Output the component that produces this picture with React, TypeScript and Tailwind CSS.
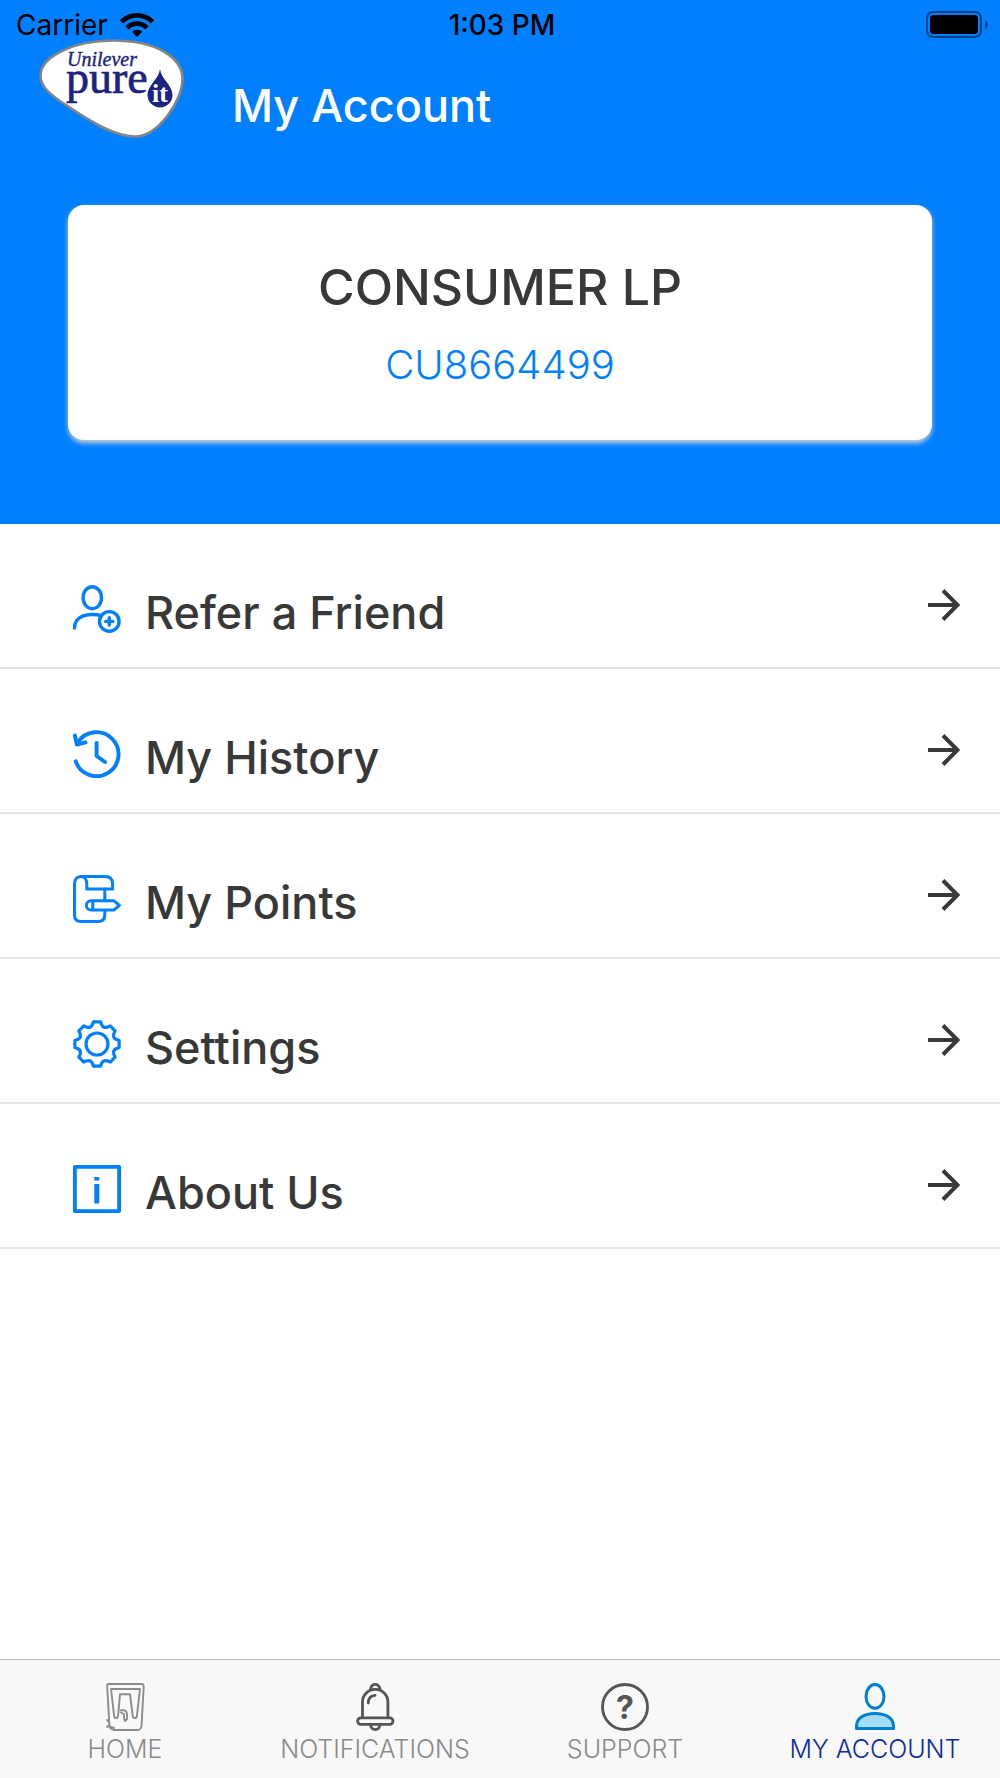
import type { ReactNode } from "react";

type iconProps = {
  children: ReactNode;
  className?: string;
};

const Icon = ({ children, className = "" }: iconProps) => (
  <svg viewBox="0 0 48 48" fill="none" stroke="currentColor" strokeLinecap="round" strokeLinejoin="round" aria-hidden="true" className={`size-12 shrink-0 ${className}`}>
    {children}
  </svg>
);

const point = (radius: number, degrees: number) => {
  const angle = (degrees * Math.PI) / 180;
  return `${(24 + radius * Math.sin(angle)).toFixed(2)} ${(24 - radius * Math.cos(angle)).toFixed(2)}`;
};

// eight teeth, with a rounded valley between each pair
const gearPath =
  [0, 45, 90, 135, 180, 225, 270, 315]
    .map((a, i) => `${i === 0 ? "M" : "L"}${point(22.4, a - 9)} L${point(22.4, a + 9)} L${point(19.6, a + 14)} Q${point(17, a + 22.5)} ${point(19.6, a + 31)}`)
    .join(" ") + " Z";

const ReferIcon = () => (
  <Icon>
    <g strokeWidth="3.4">
      <ellipse cx="19.3" cy="12.7" rx="9.2" ry="11" />
      <path d="M1.5 43C1.5 34 9 29.5 19.3 29.5C23 29.5 26 30 28.5 30.8" />
      <circle cx="36.3" cy="36.4" r="9.8" />
      <path d="M36.3 32.8V40M32.7 36.4H39.9" />
    </g>
  </Icon>
);

const HistoryIcon = () => (
  <Icon>
    <g strokeWidth="3.9">
      <path d="M2.7 31.3A22 22 0 1 0 5 12.3" />
      <path d="M1.9 5.5L3.8 14.5L12.5 12.4" />
      <path d="M23.6 13V26L32 32" />
    </g>
  </Icon>
);

const PointsIcon = () => (
  <Icon>
    <g strokeWidth="3">
      <path d="M13.8 14V9C13.8 4.5 11.5 1.5 8 1.5H32C37 1.5 39.6 4.5 39.6 9V14Z" />
      <path d="M8 1.5C4 1.5 1.5 4.5 1.5 9V40C1.5 44.5 4 46.5 8 46.5H25C29.5 46.5 31.8 44.5 31.8 40V35.3" />
      <path d="M31.8 14V25.6" />
      <path d="M18 25.8H41L46.4 30.4L41 35H18A4.6 4.6 0 0 1 18 25.8ZM19.8 25.8V35" />
    </g>
  </Icon>
);

const SettingsIcon = () => (
  <Icon>
    <path d={gearPath} strokeWidth="3.2" />
    <circle cx="24" cy="24" r="11" strokeWidth="3.2" />
  </Icon>
);

const AboutIcon = () => (
  <Icon>
    <rect x="1.8" y="1.8" width="44.4" height="44.4" rx="1" strokeWidth="4" />
    <path d="M21.3 12H26.3V15.6H21.3ZM21.3 19H26.3V38.6H21.3Z" fill="currentColor" stroke="none" />
  </Icon>
);

const HomeIcon = () => (
  <Icon className="text-[#8c8c8c]">
    <g strokeWidth="1.9">
      <path d="M7.5 1H40.5Q43 1 42.7 4L40.5 43Q40 47 36.5 47H14Q10.5 47 8.5 44L6.2 4Q5.8 1 7.5 1Z" />
      <path d="M10 6H39L35.8 33.5Q35.5 35 34 35Q32 35 31.8 33.5L29 11.3H19L17 33.5Q16.8 35 15 35Q13.5 35 13.2 33.5Z" />
      <path d="M19.5 27.3H23Q26 28 26 32V36L24 38L23 35V31L20 29.5M6 37L8 39M6 44L8.5 42M10 44L13 45" />
    </g>
  </Icon>
);

const BellIcon = () => (
  <Icon className="text-[#555555]">
    <g strokeWidth="2.8">
      <path d="M11.5 34.5V19A12.7 12.7 0 0 1 36.9 19V34.5" />
      <path d="M19.5 6Q20.5 1.4 24.2 1.4Q28 1.4 29 6" />
      <rect x="6.6" y="34.8" width="35.4" height="6.6" rx="3.3" />
      <path d="M19.5 42Q20.5 46.6 24.2 46.6Q28 46.6 29 42" />
      <path d="M17.3 20V19Q17.8 13 24 12.4" />
    </g>
  </Icon>
);

const SupportIcon = () => (
  <Icon className="text-[#555555]">
    <circle cx="24" cy="24" r="22.5" strokeWidth="2.8" />
    <text x="24" y="36" textAnchor="middle" fill="currentColor" stroke="none" className="font-['Inter',sans-serif] text-[32px] font-bold">
      ?
    </text>
  </Icon>
);

const AccountIcon = () => (
  <Icon className="text-[#0080d5]">
    <g strokeWidth="3">
      <ellipse cx="24" cy="13.4" rx="9" ry="11.9" />
      <path d="M5.5 45.5V43.5C5.5 35 13 30.6 24 30.6S42.5 35 42.5 43.5V45.5Z" fill="#a5dcf7" />
    </g>
  </Icon>
);

const WifiIcon = () => (
  <svg viewBox="0 0 34 24" fill="none" stroke="currentColor" aria-hidden="true" className="h-6 w-[34px]">
    <path d="M1.5 8.8A21.8 21.8 0 0 1 32.5 8.8" strokeWidth="4.6" />
    <path d="M7 14.8A14 14 0 0 1 27 14.8" strokeWidth="4.6" />
    <path d="M17 24L11.8 18.8A7.4 7.4 0 0 1 22.2 18.8Z" fill="currentColor" stroke="none" />
  </svg>
);

const BatteryIcon = () => (
  <svg viewBox="0 0 62 28" fill="none" aria-hidden="true" className="h-7 w-[62px]">
    <rect x="1" y="1" width="54" height="25" rx="6" stroke="black" strokeOpacity="0.45" strokeWidth="2" />
    <rect x="4" y="4" width="48" height="19" rx="3.5" fill="black" />
    <path d="M59 9Q62 11 62 13.5T59 18.5Z" fill="black" fillOpacity="0.45" />
  </svg>
);

const Logo = () => (
  <svg viewBox="0 0 148 100" role="img" aria-label="Unilever Pureit" className="h-[100px] w-[148px] shrink-0">
    <path d="M2.5 36C3 18 35 1.5 75 1.5C118 1.5 144.5 18 144.5 40C144.5 62 120 97.5 97 97.5C76 97.5 52 82 28 66C11 55 2 47 2.5 36Z" fill="white" stroke="#858585" strokeWidth="2.6" />
    <text x="29" y="27" fill="#1d2380" stroke="#1d2380" strokeWidth="0.4" className="font-['Liberation_Serif',serif] text-[20px] italic">
      Unilever
    </text>
    <text x="28" y="54" fill="#1d2380" stroke="#1d2380" strokeWidth="0.7" className="font-['Liberation_Serif',serif] text-[46px]">
      pure
    </text>
    <path d="M122 30C123 40 134.5 46 134.5 56A12.5 12.5 0 0 1 109.5 56C109.5 46 121 40 122 30Z" fill="#1d2380" />
    <text x="122" y="63" textAnchor="middle" fill="white" className="font-['Liberation_Serif',serif] text-[26px] font-bold">
      it
    </text>
  </svg>
);

const ArrowIcon = () => (
  <svg viewBox="0 0 32 32" fill="none" stroke="currentColor" strokeWidth="4" aria-hidden="true" className="mb-2 size-8 shrink-0">
    <path d="M0 16H29M15 1.5L29.5 16L15 30.5" />
  </svg>
);

const menuItems = [
  { label: "Refer a Friend", icon: <ReferIcon /> },
  { label: "My History", icon: <HistoryIcon /> },
  { label: "My Points", icon: <PointsIcon /> },
  { label: "Settings", icon: <SettingsIcon /> },
  { label: "About Us", icon: <AboutIcon /> },
];

const tabs = [
  { label: "HOME", icon: <HomeIcon />, active: false },
  { label: "NOTIFICATIONS", icon: <BellIcon />, active: false },
  { label: "SUPPORT", icon: <SupportIcon />, active: false },
  { label: "MY ACCOUNT", icon: <AccountIcon />, active: true },
];

const StatusBar = () => (
  <div className="grid h-[39px] grid-cols-3 items-start pt-[11px] pr-3 pl-4 text-[28px] leading-7 text-black">
    <div className="flex items-center gap-3">
      <span>Carrier</span>
      <WifiIcon />
    </div>
    <span className="text-center font-medium">1:03 PM</span>
    <div className="flex justify-end">
      <BatteryIcon />
    </div>
  </div>
);

const App = () => {
  return (
    <div className="flex min-h-screen flex-col bg-white font-['Inter',sans-serif] text-[#383838]">
      <header className="bg-[#007fff] pb-[84px]">
        <StatusBar />
        <div className="flex items-center gap-[46px] pl-[38px]">
          <Logo />
          <h1 className="mt-[34px] text-[45px] leading-[52px] font-medium text-white">My Account</h1>
        </div>
        <section className="mx-[68px] mt-[66px] rounded-2xl bg-white pt-[54px] pb-[53px] text-center shadow-[0_3px_5px_#c8d0d8]">
          <h2 className="text-[50px] leading-[56px] font-medium">CONSUMER LP</h2>
          <p className="mt-7 text-[40px] leading-[44px] font-light text-[#007fff]">CU8664499</p>
        </section>
      </header>

      <main className="flex-1">
        <ul>
          {menuItems.map((item) => (
            <li key={item.label} className="border-b-2 border-[#e6e6e6]">
              <a href="#" className="flex h-[143px] items-center pt-[27px] pr-10 pl-[73px]">
                <span className="text-[#007fff]">{item.icon}</span>
                <span className="mt-2 ml-6 flex-1 text-[45px] leading-[52px] font-medium">{item.label}</span>
                <ArrowIcon />
              </a>
            </li>
          ))}
        </ul>
      </main>

      <nav className="grid grid-cols-4 border-t border-[#b8b8b8] bg-[#f8f8f8]">
        {tabs.map((tab) => (
          <a key={tab.label} href="#" aria-current={tab.active ? "page" : undefined} className="flex flex-col items-center gap-[6px] pt-[23px] pb-[17px]">
            {tab.icon}
            <span className={tab.active ? "text-[25px] leading-6 font-light text-[#0a2ba5]" : "text-[25px] leading-6 font-light text-[#8a8a8a]"}>{tab.label}</span>
          </a>
        ))}
      </nav>
    </div>
  );
};

export default App;
